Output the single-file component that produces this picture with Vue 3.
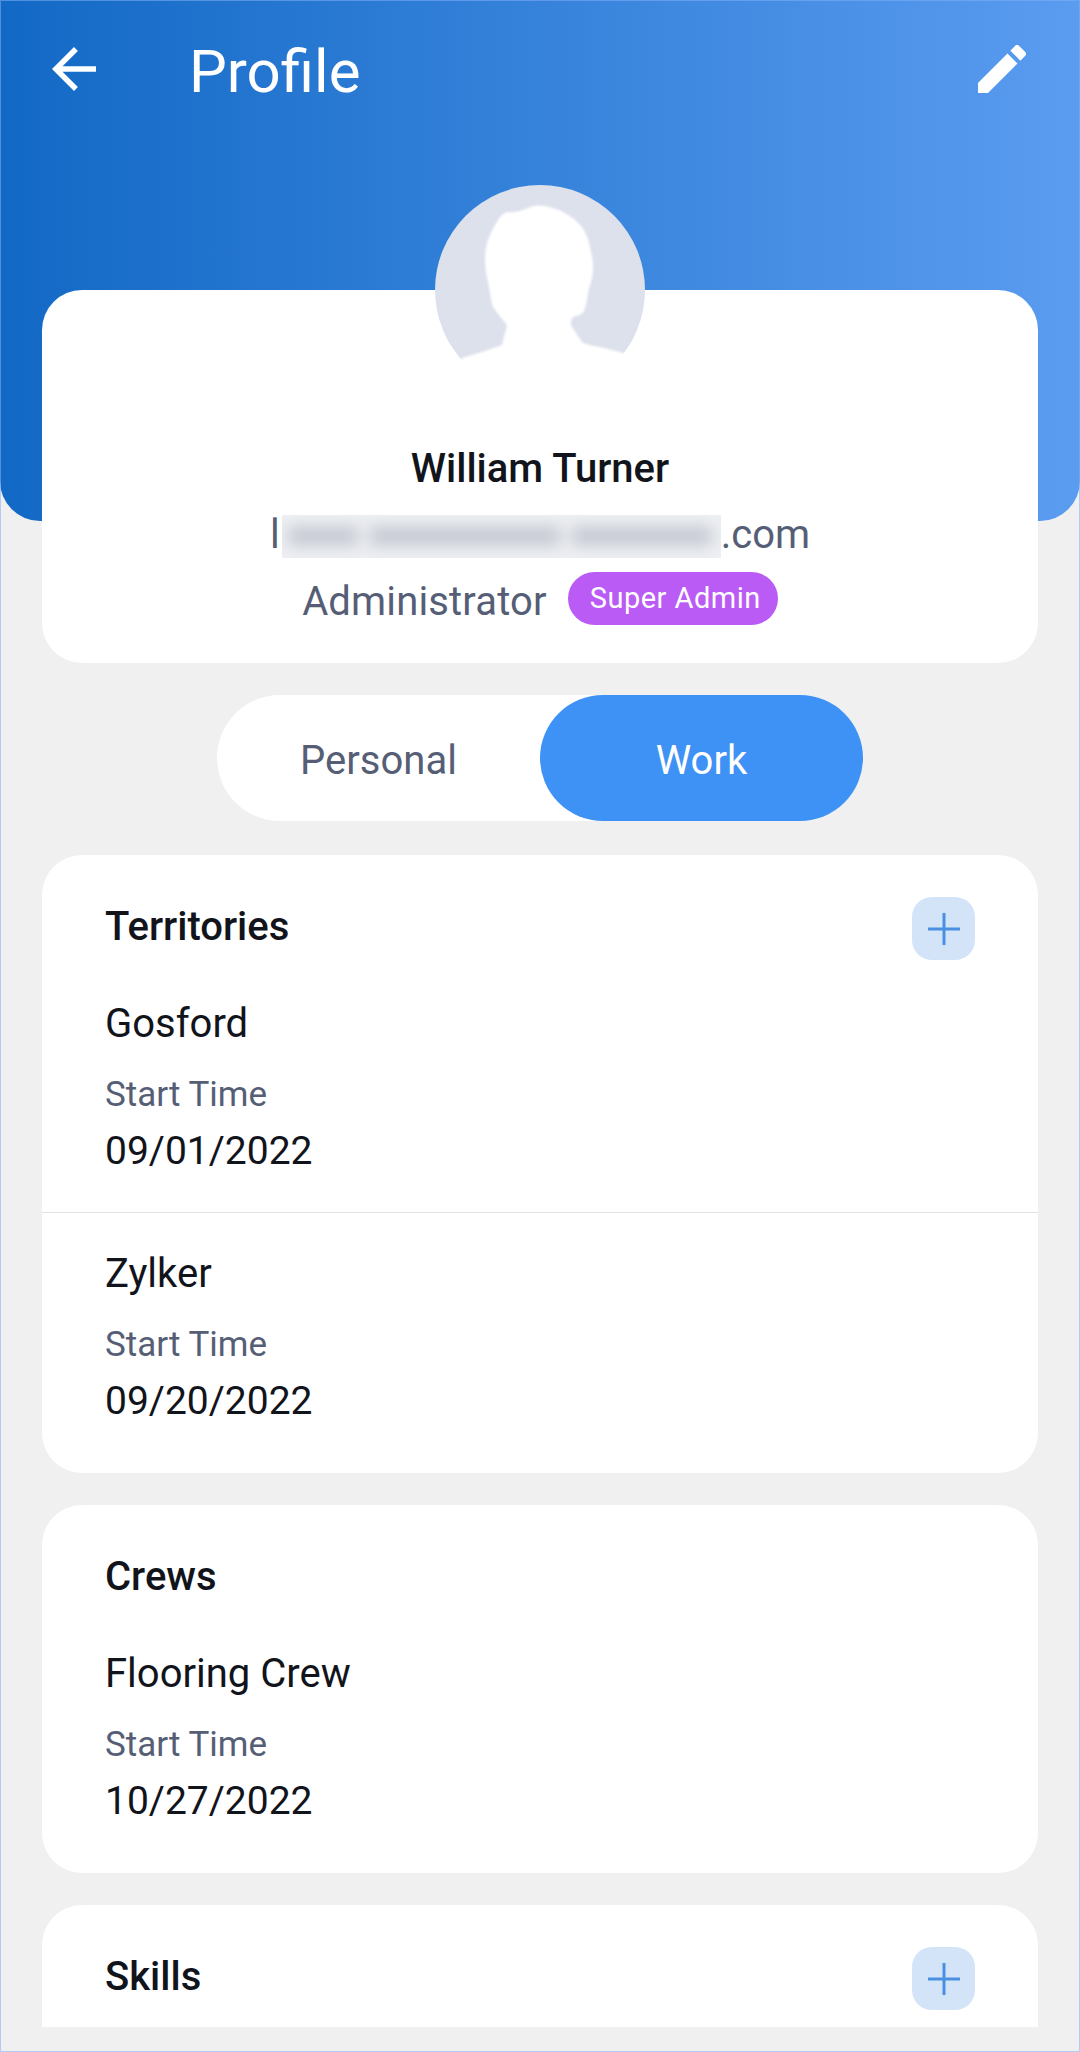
<script setup>
import { ref } from 'vue'

const tab = ref('Work')
const tabs = ['Personal', 'Work']

const sections = [
  {
    title: 'Territories',
    canAdd: true,
    items: [
      { name: 'Gosford', date: '09/01/2022' },
      { name: 'Zylker', date: '09/20/2022' },
    ],
  },
  {
    title: 'Crews',
    canAdd: false,
    items: [{ name: 'Flooring Crew', date: '10/27/2022' }],
  },
  { title: 'Skills', canAdd: true, items: [] },
]
</script>

<template>
  <div class="page">
    <div class="viewport">
      <header class="hero">
        <div class="topbar">
          <svg class="back" viewBox="4 4 16 16">
            <path d="M20 11H7.83l5.59-5.59L12 4l-8 8 8 8 1.41-1.41L7.83 13H20v-2z" />
          </svg>
          <h1>Profile</h1>
          <svg class="edit" viewBox="3 3 18 18">
            <path d="M3 17.25V21h3.75L17.81 9.94l-3.75-3.75L3 17.25zM20.71 7.04a.996.996 0 0 0 0-1.41l-2.34-2.34a.996.996 0 0 0-1.41 0l-1.83 1.83 3.75 3.75 1.83-1.83z" />
          </svg>
        </div>
      </header>

      <main class="content">
        <section class="profile-card">
          <svg class="avatar" viewBox="0 0 210 210">
            <defs>
              <filter id="soft" x="-10%" y="-10%" width="120%" height="120%">
                <feGaussianBlur stdDeviation="1" />
              </filter>
            </defs>
            <circle cx="105" cy="105" r="105" fill="#dde1ec" />
            <path
              filter="url(#soft)"
              fill="#fff"
              d="M72 27 C79 28 86 26 93 23 C98 20 104 20 110 21 C117 23 123 24 128 27 C136 31 142 36 147 42 C151 48 154 55 155 63 C157 70 158 76 158 83 C158 92 155 100 153 108 C152 116 151 122 148 128 C145 130 141 131 138 132 C136 135 135 139 137 142 C141 148 144 153 148 158 C153 160 159 161 165 162 C173 164 181 166 188 168 L195 172 L195 212 L15 212 L27 173 C40 169 54 165 67 160 C68 153 71 147 72 140 C67 134 62 128 58 122 C56 115 55 109 54 102 C52 93 50 84 50 75 C50 68 51 61 53 55 C56 47 60 39 65 32 C67 30 69 28 72 27 Z"
            />
          </svg>
          <h2>William Turner</h2>
          <p class="email">
            <span>l</span>
            <span class="redacted"><i></i><i></i><i></i></span>
            <span>.com</span>
          </p>
          <p class="role">
            <span>Administrator</span>
            <span class="badge">Super Admin</span>
          </p>
        </section>

        <div class="switch">
          <button
            v-for="t in tabs"
            :key="t"
            :class="{ active: tab === t }"
            @click="tab = t"
          >
            {{ t }}
          </button>
        </div>

        <section v-for="s in sections" :key="s.title" class="card">
          <div class="card-head">
            <h3>{{ s.title }}</h3>
            <button v-if="s.canAdd" class="add">
              <svg viewBox="0 0 32 32"><path d="M14.5 0h3v14.5H32v3H17.5V32h-3V17.5H0v-3h14.5z" /></svg>
            </button>
          </div>
          <div v-for="item in s.items" :key="item.name" class="item">
            <div class="item-name">{{ item.name }}</div>
            <div class="item-label">Start Time</div>
            <div class="item-date">{{ item.date }}</div>
          </div>
        </section>
      </main>
    </div>
  </div>
</template>

<style>
body {
  margin: 0;
}
</style>

<style scoped>
.page {
  position: relative;
  width: 1080px;
  height: 2052px;
  background: #f0f0f0;
  font-family: Roboto, sans-serif;
  color: #12141c;
}

/* thin light edge round the whole screen */
.page::after {
  content: '';
  position: absolute;
  inset: 0;
  border: 1px solid rgba(130, 175, 245, 0.55);
  pointer-events: none;
}

.viewport {
  height: 2027px;
  overflow: hidden;
}

.hero {
  height: 521px;
  box-sizing: border-box;
  padding: 33px 54px 0 52px;
  background: linear-gradient(90deg, #1269c5 0%, #5a9cf0 100%);
  border-radius: 0 0 40px 40px;
}

.topbar {
  display: flex;
  align-items: center;
  height: 72px;
}

.back {
  width: 44px;
  height: 44px;
  fill: #fff;
}

h1 {
  margin: 5px 0 0 93px;
  flex: 1;
  font-size: 60px;
  font-weight: 400;
  color: #fff;
}

.edit {
  width: 48px;
  height: 48px;
  fill: #fff;
}

.content {
  display: flex;
  flex-direction: column;
  gap: 32px;
  margin-top: -231px;
  padding: 0 42px;
}

.profile-card {
  position: relative;
  height: 373px;
  box-sizing: border-box;
  padding-top: 150px;
  background: #fff;
  border-radius: 40px;
  text-align: center;
}

.avatar {
  position: absolute;
  top: -105px;
  left: 393px;
  width: 210px;
  height: 210px;
}

h2 {
  margin: 0;
  font-size: 40px;
  line-height: 58px;
  font-weight: 500;
}

.email,
.role {
  display: flex;
  justify-content: center;
  align-items: center;
  margin: 0;
  font-size: 40px;
  color: #565e76;
}

.email {
  height: 46px;
  margin-top: 13px;
}

.redacted {
  display: flex;
  align-items: center;
  gap: 12px;
  width: 439px;
  height: 43px;
  box-sizing: border-box;
  margin: 4px 0 0 2px;
  padding: 0 6px;
  overflow: hidden;
  background: #eef0f3;
}

.redacted i {
  display: block;
  height: 18px;
  background: #c1c5cf;
  filter: blur(8px);
}

.redacted i:nth-child(1) {
  width: 70px;
}

.redacted i:nth-child(2) {
  width: 190px;
}

.redacted i:nth-child(3) {
  width: 140px;
}

.role {
  height: 56px;
  margin-top: 16px;
  gap: 21px;
}

.role span:first-child {
  padding-top: 1px;
  letter-spacing: 0.15px;
}

.badge {
  height: 53px;
  margin-bottom: 5px;
  padding: 0 17px 0 22px;
  border-radius: 27px;
  background: #bb5bf6;
  color: #fff;
  font-size: 29px;
  line-height: 53px;
  letter-spacing: 0.5px;
}

.switch {
  display: flex;
  align-self: center;
  width: 646px;
  height: 126px;
  background: #fff;
  border-radius: 63px;
}

.switch button {
  flex: 1;
  padding: 4px 0 0;
  border: 0;
  border-radius: 63px;
  background: transparent;
  font: 400 40px Roboto, sans-serif;
  color: #565e76;
}

.switch button.active {
  background: #3f92f5;
  color: #fff;
}

.switch + .card {
  margin-top: 2px;
}

.card {
  background: #fff;
  border-radius: 40px;
}

.card:last-child {
  min-height: 200px;
}

.card-head {
  display: flex;
  align-items: center;
  justify-content: space-between;
  height: 64px;
  padding: 42px 63px 0 63px;
}

h3 {
  margin: -6px 0 0;
  font-size: 40px;
  font-weight: 500;
}

.add {
  display: flex;
  align-items: center;
  justify-content: center;
  width: 63px;
  height: 63px;
  margin-top: -1px;
  padding: 0;
  border: 0;
  border-radius: 20px;
  background: #d3e4f9;
}

.add svg {
  width: 32px;
  height: 32px;
  fill: #4a8fe2;
}

.item {
  padding: 39px 63px 37px;
  border-bottom: 1px solid #e2e2e2;
}

.item + .item {
  padding-top: 37px;
}

.item:last-child {
  padding-bottom: 48px;
  border-bottom: 0;
}

.item-name,
.item-date {
  font-size: 40px;
  line-height: 48px;
}

.item-date {
  font-size: 39px;
  margin-top: 11px;
}

.item-label {
  margin-top: 26px;
  font-size: 35px;
  line-height: 42px;
  color: #565e76;
}
</style>
